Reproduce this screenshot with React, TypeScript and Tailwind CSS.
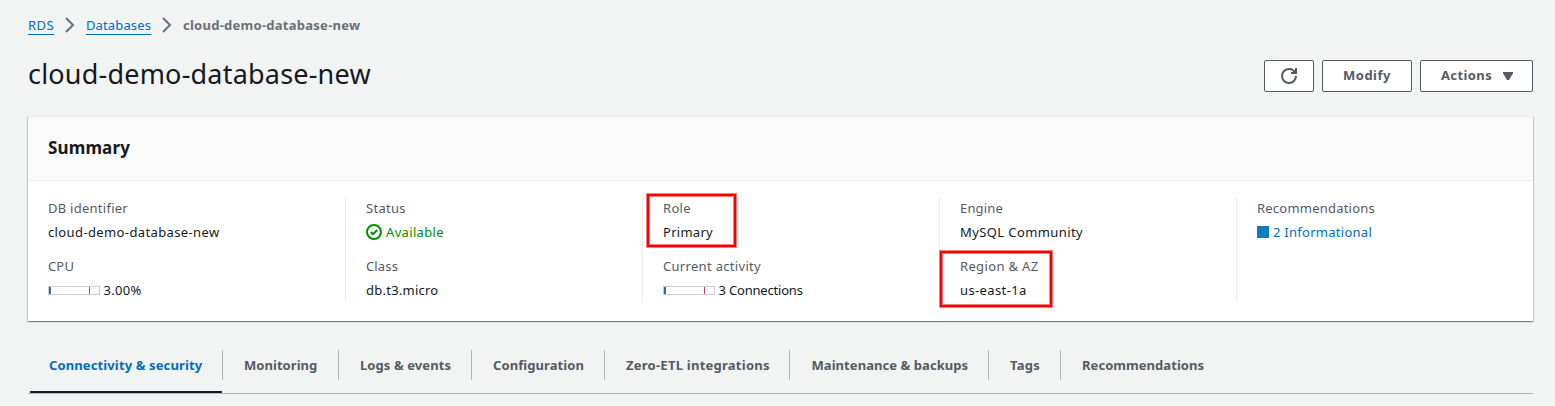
import type { ReactNode } from "react";

const summary: { label: string; labelTracking: string; value: ReactNode; marked?: string }[][] = [
  [
    {
      label: "DB identifier",
      labelTracking: "tracking-[0.26px]",
      value: <span className="tracking-[0.38px]">cloud-demo-database-new</span>,
    },
    {
      label: "CPU",
      labelTracking: "tracking-[0.15px]",
      value: (
        <>
          <Meter />
          <span className="tracking-[0.28px]">3.00%</span>
        </>
      ),
    },
  ],
  [
    {
      label: "Status",
      labelTracking: "tracking-[0.3px]",
      value: (
        <span className="flex items-center gap-1 text-[#008f00]">
          <svg viewBox="0 0 16 16" className="size-4 fill-none stroke-current stroke-2">
            <circle cx="8" cy="8" r="7" />
            <path d="M4.8 8l2.2 2.2 4.2-4.2" />
          </svg>
          <span className="tracking-[0.34px]">Available</span>
        </span>
      ),
    },
    {
      label: "Class",
      labelTracking: "tracking-[0.15px]",
      value: <span className="tracking-[0.24px]">db.t3.micro</span>,
    },
  ],
  [
    {
      label: "Role",
      labelTracking: "tracking-[0.3px]",
      value: <span className="tracking-[0.28px]">Primary</span>,
      marked: "-left-4 -top-[3px] h-[53px] w-[89px]",
    },
    {
      label: "Current activity",
      labelTracking: "tracking-[0.31px]",
      value: (
        <>
          <Meter />
          <span className="tracking-[-0.2px]">3 Connections</span>
        </>
      ),
    },
  ],
  [
    {
      label: "Engine",
      labelTracking: "tracking-[0.15px]",
      value: <span className="tracking-[0.4px]">MySQL Community</span>,
    },
    {
      label: "Region & AZ",
      labelTracking: "tracking-[0.35px]",
      value: <span className="tracking-[0.38px]">us-east-1a</span>,
      marked: "-left-[20px] -top-[4px] h-[56px] w-[112px]",
    },
  ],
  [
    {
      label: "Recommendations",
      labelTracking: "tracking-[0.22px]",
      value: (
        <a href="#" className="flex items-center gap-1 text-[#006dc1]">
          <span className="size-3 bg-[#117dc1]" />
          <span className="tracking-[0.27px]">2 Informational</span>
        </a>
      ),
    },
  ],
];

const tabs = [
  { name: "Connectivity & security", style: "w-[195px] tracking-[0.12px]" },
  { name: "Monitoring", style: "w-[116px] tracking-[0.05px]" },
  { name: "Logs & events", style: "w-[133px] tracking-[0.08px]" },
  { name: "Configuration", style: "w-[133px] tracking-[0.08px]" },
  { name: "Zero-ETL integrations", style: "w-[185px] tracking-[0.25px]" },
  { name: "Maintenance & backups", style: "w-[199px] tracking-[0.06px] indent-[0.5px]" },
  { name: "Tags", style: "w-[72px] tracking-[0.25px]" },
  { name: "Recommendations", style: "w-[165px] tracking-[0.05px]" },
];

function Meter() {
  return (
    <span className="mr-[3.6px] flex h-[9px] w-[52px] border border-[#ccc] bg-white">
      <span className="w-[2px] bg-[#3b6a8f]" />
      <span className="ml-[38px] w-px bg-[#d13f4a]" />
    </span>
  );
}

function Chevron() {
  return (
    <svg viewBox="0 0 16 16" className="mx-2 size-4 fill-none stroke-[#687078] stroke-2">
      <path d="M4 1l7 7-7 7" />
    </svg>
  );
}

function Button({ className, children }: { className: string; children: ReactNode }) {
  return (
    <button
      className={`flex h-8 items-center justify-center rounded-[2px] border border-[#545b64] bg-white text-[13px] font-bold text-[#545b64] ${className}`}
    >
      {children}
    </button>
  );
}

export default function App() {
  return (
    <div className="h-[406px] overflow-hidden bg-[#f2f3f3] pr-[22px] pl-7 font-['Noto_Sans',sans-serif] text-[13px] text-[#16191f]">
      <nav className="flex h-[50px] items-center">
        <a href="#" className="mt-px h-[18px] w-[26px] border-b border-[#006dc1] leading-[16px] tracking-[0.4px] text-[#006dc1]">
          RDS
        </a>
        <Chevron />
        <a href="#" className="mt-px h-[18px] w-[65px] border-b border-[#006dc1] leading-[16px] tracking-[0.13px] text-[#006dc1]">
          Databases
        </a>
        <Chevron />
        <span className="mt-[2px] font-bold tracking-[0.26px] text-[#687078]">cloud-demo-database-new</span>
      </nav>

      <header className="flex h-[66px] items-start justify-between">
        <h1 className="mt-[6px] text-[27px] leading-[36px] tracking-[0.2px]">cloud-demo-database-new</h1>
        <div className="mt-[10px] flex gap-2">
          <Button className="w-[50px]">
            <svg viewBox="0 0 16 16" className="size-4 fill-none stroke-current stroke-2">
              <path d="M10 5h5V0" />
              <path d="M15 8a6.957 6.957 0 0 1-7 7 6.957 6.957 0 0 1-7-7 6.957 6.957 0 0 1 7-7 6.87 6.87 0 0 1 6.3 4" />
            </svg>
          </Button>
          <Button className="w-[90px] tracking-[0.5px]">Modify</Button>
          <Button className="w-[113px] pl-1 tracking-[0.4px]">
            Actions
            <svg viewBox="0 0 16 16" className="ml-2 size-4 fill-current">
              <path d="M3 4h10v1.2l-4 6.8H7L3 5.2z" />
            </svg>
          </Button>
        </div>
      </header>

      <section className="h-[205px] border-t border-[#eaeded] bg-white shadow-[0_1px_1px_0_rgba(0,28,36,0.3),1px_1px_1px_0_rgba(0,28,36,0.15),-1px_1px_1px_0_rgba(0,28,36,0.15)]">
        <div className="flex h-16 items-center border-b border-[#eaeded] bg-[#fafafa] px-5">
          <h2 className="-mt-px text-[17px] font-bold tracking-[0.13px]">Summary</h2>
        </div>
        <div className="flex pt-4 pl-5">
          {summary.map((column, index) => (
            <div
              key={index}
              className={`flex h-[104px] flex-col gap-3 leading-[22px] ${
                index === 0 ? "w-[297px] shrink-0" : index === 4 ? "min-w-0 flex-1 border-l border-[#eaeded] pl-5" : "w-[297px] shrink-0 border-l border-[#eaeded] pl-5"
              }`}
            >
              {column.map((field) => (
                <div key={field.label} className="relative h-[46px]">
                  <div className={`text-[#545b64] ${field.labelTracking}`}>{field.label}</div>
                  <div className="mt-[2px] flex items-center">{field.value}</div>
                  {field.marked && (
                    <div
                      className={`absolute border-2 border-[#f80000] shadow-[0_0_0_1px_rgba(248,0,0,0.5),inset_0_0_0_1px_rgba(248,0,0,0.5)] ${field.marked}`}
                    />
                  )}
                </div>
              ))}
            </div>
          ))}
        </div>
      </section>

      <div className="mt-[29px] flex h-[44px] border-b border-[#aab7b8] font-bold text-[#545b64]">
        {tabs.map((tab, index) => (
          <div key={tab.name} className={`relative h-[30px] ${tab.style}`}>
            <div
              className={`flex h-[30px] items-center pt-[2px] pl-[21px] whitespace-nowrap ${
                index < tabs.length - 1 ? "border-r border-[#aab7b8]" : ""
              } ${index === 0 ? "text-[#006dc1]" : ""}`}
            >
              {tab.name}
            </div>
            {index === 0 && <div className="absolute top-[41px] right-px left-[2px] h-[2px] bg-[#16191f]" />}
          </div>
        ))}
      </div>
    </div>
  );
}
